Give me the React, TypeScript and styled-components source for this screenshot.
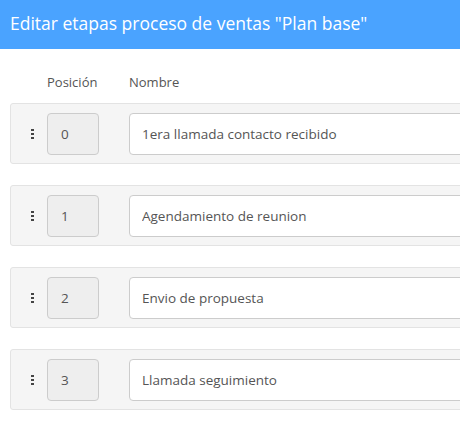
import styled, { createGlobalStyle } from "styled-components";

const GlobalStyle = createGlobalStyle`
  body {
    margin: 0;
    font-family: "Open Sans", "Noto Sans", sans-serif;
    background: #fff;
    color: #555;
  }
`;

const etapas = [
  "1era llamada contacto recibido",
  "Agendamiento de reunion",
  "Envio de propuesta",
  "Llamada seguimiento",
];

function App() {
  return (
    <Page>
      <GlobalStyle />
      <Header>Editar etapas proceso de ventas "Plan base"</Header>
      <Body>
        <Labels>
          <PosLabel>Posición</PosLabel>
          <div>Nombre</div>
        </Labels>
        <List>
          {etapas.map((nombre, i) => (
            <Row key={i}>
              <Handle>
                <Dot />
                <Dot />
                <Dot />
              </Handle>
              <PosBox>{i}</PosBox>
              <NameInput defaultValue={nombre} />
            </Row>
          ))}
        </List>
      </Body>
    </Page>
  );
}

export default App;

const Page = styled.div`
  width: 460px;
  height: 429px;
  overflow: hidden;
`;
const Header = styled.div`
  height: 49px;
  background-color: #4aa3ff;
  color: #fff;
  font-size: 17.5px;
  padding: 0 10px;
  display: flex;
  align-items: center;
  padding-bottom: 3px;
  box-sizing: border-box;
  white-space: nowrap;
`;
const Body = styled.div`
  padding: 24px 0 0 10px;
`;
const Labels = styled.div`
  display: flex;
  font-size: 13px;
  color: #555;
  padding-left: 37px;
  height: 22px;
`;
const PosLabel = styled.div`
  width: 82px;
`;
const List = styled.div`
  margin-top: 8px;
  display: flex;
  flex-direction: column;
  gap: 21px;
`;
const Row = styled.div`
  width: 480px;
  height: 61px;
  box-sizing: border-box;
  background: #f5f5f5;
  border: 1px solid #e3e3e3;
  border-radius: 3px;
  display: flex;
  align-items: center;
  padding-left: 20px;
`;
const Handle = styled.div`
  width: 16px;
  display: flex;
  flex-direction: column;
  gap: 2px;
`;
const Dot = styled.span`
  width: 3px;
  height: 2px;
  background: #444;
`;
const PosBox = styled.div`
  width: 52px;
  height: 42px;
  box-sizing: border-box;
  background: #eee;
  border: 1px solid #ccc;
  border-radius: 4px;
  font-size: 13.5px;
  color: #555;
  display: flex;
  align-items: center;
  padding-left: 13px;
  margin-right: 30px;
`;
const NameInput = styled.input`
  flex: 1;
  height: 42px;
  box-sizing: border-box;
  background: #fff;
  border: 1px solid #ccc;
  border-radius: 4px;
  font-family: "Open Sans", "Noto Sans", sans-serif;
  font-size: 13.5px;
  color: #555;
  padding: 0 12px;
  outline: none;
`;
